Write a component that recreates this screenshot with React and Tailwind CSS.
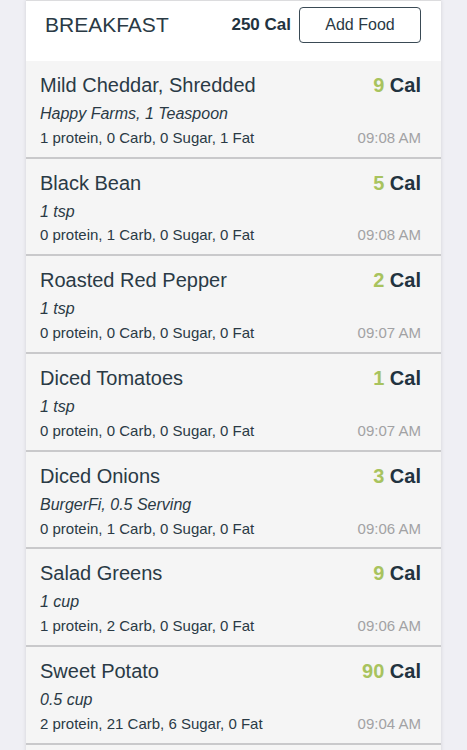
import React from 'react';

const foods = [
  { name: 'Mild Cheddar, Shredded', cal: 9, serving: 'Happy Farms, 1 Teaspoon', macros: '1 protein, 0 Carb, 0 Sugar, 1 Fat', time: '09:08 AM' },
  { name: 'Black Bean', cal: 5, serving: '1 tsp', macros: '0 protein, 1 Carb, 0 Sugar, 0 Fat', time: '09:08 AM' },
  { name: 'Roasted Red Pepper', cal: 2, serving: '1 tsp', macros: '0 protein, 0 Carb, 0 Sugar, 0 Fat', time: '09:07 AM' },
  { name: 'Diced Tomatoes', cal: 1, serving: '1 tsp', macros: '0 protein, 0 Carb, 0 Sugar, 0 Fat', time: '09:07 AM' },
  { name: 'Diced Onions', cal: 3, serving: 'BurgerFi, 0.5 Serving', macros: '0 protein, 1 Carb, 0 Sugar, 0 Fat', time: '09:06 AM' },
  { name: 'Salad Greens', cal: 9, serving: '1 cup', macros: '1 protein, 2 Carb, 0 Sugar, 0 Fat', time: '09:06 AM' },
  { name: 'Sweet Potato', cal: 90, serving: '0.5 cup', macros: '2 protein, 21 Carb, 6 Sugar, 0 Fat', time: '09:04 AM' },
];

function FoodRow({ food }) {
  return (
    <div className="h-[97.7px] border-b-2 border-[#c9c9cb] bg-[#f5f5f5] pl-[14px] pr-[20px] pt-[12px]">
      <div className="flex items-center justify-between h-[24px]">
        <span className="text-[20px] text-[#2a3a45]">{food.name}</span>
        <span className="text-[20px] font-bold text-[#22333f]">
          <span className="text-[#a8c35e]">{food.cal}</span> Cal
        </span>
      </div>
      <div className="mt-[7px] h-[20px] flex items-center text-[16px] italic text-[#2a3a45]">{food.serving}</div>
      <div className="mt-[4px] h-[20px] flex items-center justify-between">
        <span className="text-[15px] text-[#2a3a45]">{food.macros}</span>
        <span className="text-[15px] text-[#a2a2a4]">{food.time}</span>
      </div>
    </div>
  );
}

export default function App() {
  return (
    <div className="h-[750px] overflow-hidden bg-[#efeff4] font-['Liberation_Sans',Arial,sans-serif]">
      <div className="ml-[26px] w-[415px] h-[760px] bg-[#f5f5f5] shadow-[0_0_4px_rgba(0,0,0,0.12)]">
        {/* header */}
        <div className="h-[61px] bg-white border-t border-[#dcdcde] flex items-start pt-[6px] pl-[19px] pr-[20px]">
          <div className="flex-1 h-[36px] flex items-center text-[21px] text-[#2a3a45]">BREAKFAST</div>
          <div className="h-[36px] flex items-center text-[17px] font-bold text-[#22333f] mr-[8px]">250 Cal</div>
          <button className="w-[122px] h-[36px] border border-[#3a4a55] rounded-[4px] text-[16px] text-[#2a3a45] bg-white">
            Add Food
          </button>
        </div>
        {foods.map((f, i) => (
          <FoodRow key={i} food={f} />
        ))}
      </div>
    </div>
  );
}
